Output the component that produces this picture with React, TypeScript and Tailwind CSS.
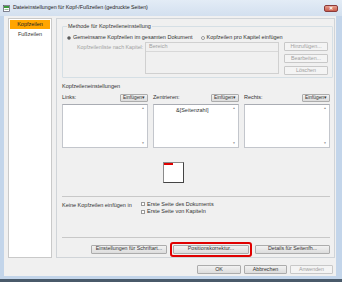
import React from "react";

const font = { fontFamily: '"Liberation Sans", Arial, sans-serif' };

function Btn({ children, className = "", disabled = false }: { children: React.ReactNode; className?: string; disabled?: boolean }) {
  return (
    <div
      className={
        "flex items-center justify-center whitespace-nowrap rounded-[1px] border border-[#acacac] bg-gradient-to-b from-[#f2f2f2] to-[#dcdcdc] text-[5.3px] leading-none " +
        (disabled ? "text-[#a0a0a0] border-[#c8c8c8] from-[#f4f4f4] to-[#f4f4f4] " : "text-[#333] ") +
        className
      }
    >
      {children}
    </div>
  );
}

function TextBox({ text }: { text?: string }) {
  return (
    <div className="flex h-[44px] w-[86px] border border-[#c3c6cc] border-t-[#a9acb3] bg-white">
      <div className="flex-1 pl-[22px] pt-[3px] text-[5.5px] leading-none text-[#333]">{text}</div>
      <div className="flex w-[8px] flex-col items-center justify-between py-[2px] text-[3px] leading-none text-[#888]">
        <span>▲</span>
        <span>▼</span>
      </div>
    </div>
  );
}

function Column({ label, text }: { label: string; text?: string }) {
  return (
    <div className="flex w-[86px] flex-col">
      <div className="flex h-[9px] items-center justify-between">
        <span className="text-[5.5px] leading-none text-[#333]">{label}</span>
        <Btn className="h-[8px] w-[28px] border-[#8e8f8f] !text-[4.8px]">Einfügen▾</Btn>
      </div>
      <div className="mt-[1px]">
        <TextBox text={text} />
      </div>
    </div>
  );
}

export default function App() {
  return (
    <div style={font} className="flex h-[282px] w-[342px] flex-col bg-[#c3d5ea]">
      {/* Title bar */}
      <div className="flex h-[16px] items-center bg-gradient-to-b from-[#e3ecf6] to-[#d3e0ef] pl-[3px] pr-[4px]">
        <svg width="7" height="7" viewBox="0 0 7 7">
          <rect x="0.5" y="0.5" width="6" height="6" fill="#fff" stroke="#556" strokeWidth="0.7" />
          <rect x="1" y="1" width="5" height="2" fill="#3a9a3a" />
          <rect x="1.5" y="4" width="4" height="0.8" fill="#7a7" />
        </svg>
        <span className="ml-[3px] text-[5.3px] leading-none text-[#222]">
          Dateieinstellungen für Kopf-/Fußzeilen (gedruckte Seiten)
        </span>
        <div className="ml-auto flex h-[7px] w-[14px] items-center justify-center rounded-[2px] border border-[#8a3a3a] bg-gradient-to-b from-[#e8a090] to-[#c85a4a]">
          <span className="text-[5px] font-bold leading-none text-white">✕</span>
        </div>
      </div>

      {/* Client */}
      <div className="mx-[4px] flex h-[260px] w-[332px] flex-col bg-[#f0f0f0]">
        <div className="flex pt-[2px]">
          {/* Left list */}
          <div className="ml-[4px] flex h-[240px] w-[44px] flex-col border border-[#c9c9c9] bg-white p-[1px]">
            <div className="flex h-[9px] items-center justify-center bg-[#ffa500] text-[5.5px] leading-none text-[#222]">
              Kopfzeilen
            </div>
            <div className="mt-[1px] flex h-[9px] items-center justify-center text-[5.5px] leading-none text-[#333]">
              Fußzeilen
            </div>
          </div>

          {/* Main panel */}
          <div className="ml-[4px] flex h-[240px] w-[279px] flex-col border border-[#d0d4d8] pl-[5px]">
            {/* Group box */}
            <div className="relative mt-[7px] h-[52px] w-[271px] rounded-[1px] border border-[#d5dfe5]">
              <span className="absolute left-[4px] top-[-3px] whitespace-nowrap bg-[#f0f0f0] px-[1px] text-[5.5px] leading-none text-[#333]">
                Methode für Kopfzeileneinstellung
              </span>
              <div className="flex flex-col pl-[4px] pt-[7px]">
                <div className="flex h-[7px] items-center">
                  <div className="flex h-[4px] w-[4px] items-center justify-center rounded-full border border-[#888] bg-white">
                    <div className="h-[2px] w-[2px] rounded-full bg-[#333]" />
                  </div>
                  <span className="ml-[2px] whitespace-nowrap text-[5.5px] leading-none text-[#333]">Gemeinsame Kopfzeilen im gesamten Dokument</span>
                  <div className="ml-[8px] h-[4px] w-[4px] rounded-full border border-[#999] bg-white" />
                  <span className="ml-[2px] whitespace-nowrap text-[5.5px] leading-none text-[#333]">Kopfzeilen pro Kapitel einfügen</span>
                </div>
                <div className="mt-[1px] flex">
                  <span className="ml-[10px] mt-[3px] w-[68px] whitespace-nowrap text-[5.3px] leading-none text-[#a0a0a0]">
                    Kopfzeilenliste nach Kapitel:
                  </span>
                  <div className="flex h-[32px] w-[134px] flex-col border border-[#d0d0d0] bg-[#f0f0f0]">
                    <div className="flex h-[9px] items-center border-b border-[#d8d8d8] pl-[3px] text-[5.5px] leading-none text-[#a0a0a0]">
                      Bereich
                    </div>
                  </div>
                  <div className="ml-[5px] flex flex-col gap-[3px]">
                    <Btn disabled className="h-[9px] w-[44px]">Hinzufügen...</Btn>
                    <Btn disabled className="h-[9px] w-[44px]">Bearbeiten...</Btn>
                    <Btn disabled className="h-[9px] w-[44px]">Löschen</Btn>
                  </div>
                </div>
              </div>
            </div>

            {/* Kopfzeileneinstellungen */}
            <div className="mt-[6px] text-[5.5px] leading-none text-[#333]">Kopfzeileneinstellungen</div>
            <div className="mt-[4px] flex gap-[5px]">
              <Column label="Links:" />
              <Column label="Zentrieren:" text="&[Seitenzahl]" />
              <Column label="Rechts:" />
            </div>

            {/* Preview */}
            <div className="mt-[14px] flex w-[268px]">
              <div className="ml-[101px] h-[21px] w-[21px] border border-[#8a8a8a] border-r-[#444] border-b-[#444] bg-white">
                <div className="h-[2px] w-[9px] bg-[#e00000]" />
              </div>
            </div>

            <div className="mt-[13px] h-[1px] w-[268px] bg-[#c8c8c8]" />

            <div className="mt-[5px] flex">
              <span className="mt-[1px] w-[79px] whitespace-nowrap text-[5.5px] leading-none text-[#333]">Keine Kopfzeilen einfügen in</span>
              <div className="flex flex-col gap-[2px]">
                <div className="flex items-center">
                  <div className="h-[4px] w-[4px] border border-[#999] bg-white" />
                  <span className="ml-[2px] text-[5.5px] leading-none text-[#333]">Erste Seite des Dokuments</span>
                </div>
                <div className="flex items-center">
                  <div className="h-[4px] w-[4px] border border-[#999] bg-white" />
                  <span className="ml-[2px] text-[5.5px] leading-none text-[#333]">Erste Seite von Kapiteln</span>
                </div>
              </div>
            </div>

            <div className="mt-[22px] h-[1px] w-[268px] bg-[#c8c8c8]" />

            <div className="mt-[4px] flex w-[268px] items-center justify-end gap-[1px]">
              <Btn className="h-[9px] w-[76px]">Einstellungen für Schriftart...</Btn>
              <div className="ml-[2px] rounded-[3px] border-[2px] border-[#e00000] p-[1px]">
                <Btn className="h-[9px] w-[76px]">Positionskorrektur...</Btn>
              </div>
              <Btn className="ml-[2px] h-[9px] w-[75px]">Details für Seitenfh...</Btn>
            </div>
          </div>
        </div>

        {/* Bottom buttons */}
        <div className="mt-[7px] flex justify-end gap-[3px] pr-[3px]">
          <Btn className="h-[9px] w-[44px] border-[#3c7fb1]">OK</Btn>
          <Btn className="h-[9px] w-[43px]">Abbrechen</Btn>
          <Btn disabled className="h-[9px] w-[43px]">Anwenden</Btn>
        </div>
      </div>
      <div className="mt-auto h-[3px] bg-[#4a5a6a]" />
    </div>
  );
}
